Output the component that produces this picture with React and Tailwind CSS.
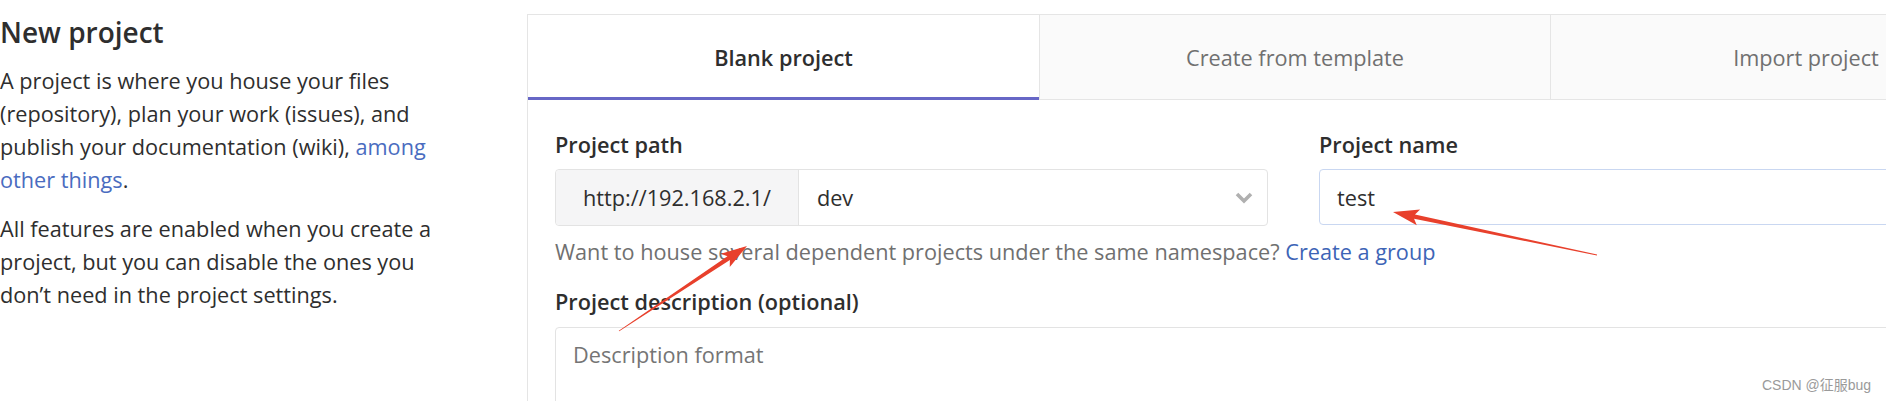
import React from "react";

// tapered annotation arrow, tail -> tip
function arrowPoints(tx, ty, hx, hy, headLen = 22, headW = 8, shaftW = 2.2) {
  const len = Math.hypot(hx - tx, hy - ty);
  const dx = (hx - tx) / len;
  const dy = (hy - ty) / len;
  const nx = -dy;
  const ny = dx;
  const bx = hx - dx * headLen;
  const by = hy - dy * headLen;
  const bbx = hx - dx * (headLen + 4);
  const bby = hy - dy * (headLen + 4);
  const pts = [
    [tx + nx * 0.4, ty + ny * 0.4],
    [bx + nx * shaftW, by + ny * shaftW],
    [bbx + nx * headW, bby + ny * headW],
    [hx, hy],
    [bbx - nx * headW, bby - ny * headW],
    [bx - nx * shaftW, by - ny * shaftW],
    [tx - nx * 0.4, ty - ny * 0.4],
  ];
  return pts.map((p) => p.join(",")).join(" ");
}

function Tab({ label, active, first }) {
  return (
    <div
      className={
        "w-[511px] h-[85px] shrink-0 flex items-center justify-center " +
        (active
          ? "bg-white border-b-[3px] border-[#6767c6] font-semibold text-[#2e2e2e]"
          : "bg-[#fafafa] border-b border-[#e5e5e5] text-[#707070]") +
        (first ? "" : " border-l border-l-[#e5e5e5]")
      }
    >
      <span className={active ? "pt-[3px]" : ""}>{label}</span>
    </div>
  );
}

export default function App() {
  return (
    <div className="relative w-[1886px] h-[401px] overflow-hidden bg-white font-['Open_Sans',sans-serif] text-[21.7px] leading-[33px] text-[#2e2e2e]">
      <div className="flex">
        <div className="w-[440px] shrink-0 pt-[14px]">
          <h4 className="text-[28px] leading-[36px] font-semibold mb-[14px]">New project</h4>
          <p className="mb-[16px]">
            A project is where you house your files (repository), plan your work (issues), and publish your
            documentation (wiki), <span className="text-[#4a6cc0]">among other things</span>.
          </p>
          <p>
            All features are enabled when you create a project, but you can disable the ones you don’t need in
            the project settings.
          </p>
        </div>

        <div className="ml-[87px] mt-[14px] w-[1540px] shrink-0 border-l border-t border-[#e5e5e5]">
          <div className="flex">
            <Tab label="Blank project" active first />
            <Tab label="Create from template" />
            <Tab label="Import project" />
          </div>

          <div className="pl-[27px] pr-[27px] pt-[28px]">
            <div className="flex gap-[51px]">
              <div className="w-[713px] shrink-0">
                <label className="block font-semibold mb-[8px]">Project path</label>
                <div className="flex h-[57px] border border-[#e3e3e3] rounded-[4px]">
                  <div className="flex items-center px-[27px] bg-[#f5f5f6] border-r border-[#e3e3e3] rounded-l-[4px]">
                    http://192.168.2.1/
                  </div>
                  <div className="flex-1 flex items-center justify-between pl-[18px] pr-[14px]">
                    <span>dev</span>
                    <svg width="18" height="12" viewBox="0 0 18 12" fill="none">
                      <polyline points="2,2 9,9 16,2" stroke="#b0b0b0" strokeWidth="3.6" />
                    </svg>
                  </div>
                </div>
              </div>
              <div className="flex-1">
                <label className="block font-semibold mb-[8px]">Project name</label>
                <div className="flex items-center h-[56px] border border-[#c9d7f1] rounded-[4px] pl-[17px]">test</div>
              </div>
            </div>

            <p className="mt-[9px] text-[#707070]">
              Want to house several dependent projects under the same namespace?{" "}
              <span className="text-[#3d64b6]">Create a group</span>
            </p>

            <label className="block font-semibold mt-[17px] mb-[9px]">Project description (optional)</label>
            <div className="h-[120px] border border-[#e3e3e3] rounded-[4px] pl-[17px] pt-[10px] text-[#757575]">
              Description format
            </div>
          </div>
        </div>
      </div>

      <svg className="absolute inset-0 pointer-events-none" width="1886" height="401">
        <polygon points={arrowPoints(619, 331, 747, 246)} fill="#e8402c" />
        <polygon points={arrowPoints(1597, 255, 1393, 212)} fill="#e8402c" />
      </svg>

      <div className="absolute left-[1762px] top-[375px] text-[14px] leading-[20px] text-[#9a9a9a] font-['Liberation_Sans','Noto_Sans_CJK_SC',sans-serif]">
        CSDN @征服bug
      </div>
    </div>
  );
}
